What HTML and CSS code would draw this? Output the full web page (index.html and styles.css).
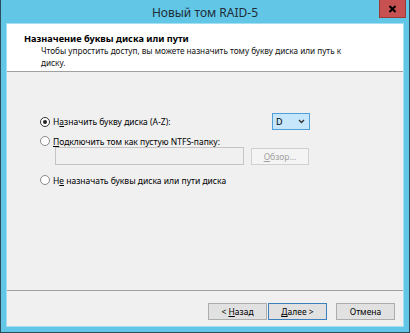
FILE: index.html
```html
<!DOCTYPE html>
<html lang="ru">
<head>
<meta charset="utf-8">
<title>Новый том RAID-5</title>
<link rel="stylesheet" href="styles.css">
</head>
<body>
<div class="window">
  <div class="titlebar">
    <span></span>
    <span class="title">Новый том RAID-5</span>
    <div class="close">
      <svg width="9" height="8" viewBox="0 0 9 8"><path d="M1.5 1 L7.5 7 M7.5 1 L1.5 7" stroke="#000" stroke-width="2" fill="none"/></svg>
    </div>
  </div>
  <div class="client">
    <div class="header">
      <div class="h-title">Назначение буквы диска или пути</div>
      <div class="h-sub">Чтобы упростить доступ, вы можете назначить тому букву диска или путь к<br>диску.</div>
    </div>
    <div class="body">
      <div class="row row1">
        <span class="radio checked"></span>
        <span class="label fixed">Н<u>а</u>значить букву диска (A-Z):</span>
        <div class="combo"><span>D</span>
          <svg width="7" height="5" viewBox="0 0 7 5"><path d="M1 1 L3.5 3.5 L6 1" stroke="#333" stroke-width="1.4" fill="none"/></svg>
        </div>
      </div>
      <div class="row row2">
        <span class="radio"></span>
        <span class="label"><u>П</u>одключить том как пустую NTFS-папку:</span>
      </div>
      <div class="pathrow">
        <div class="textbox"></div>
        <div class="btn disabled"><span><u>О</u>бзор...</span></div>
      </div>
      <div class="row row3">
        <span class="radio"></span>
        <span class="label">Н<u>е</u> назначать буквы диска или пути диска</span>
      </div>
    </div>
    <div class="footer">
      <div class="btn"><span>&lt; <u>Н</u>азад</span></div>
      <div class="btn default"><span><u>Д</u>алее &gt;</span></div>
      <div class="btn cancel"><span>Отмена</span></div>
    </div>
  </div>
</div>
</body>
</html>
```
FILE: styles.css
```css
html, body {
  margin: 0;
  padding: 0;
}
body {
  width: 410px;
  height: 333px;
  overflow: hidden;
  font-family: "Noto Sans", "Open Sans", sans-serif;
  color: #000;
}
.window {
  box-sizing: border-box;
  width: 410px;
  height: 333px;
  background: #62c6e6;
  border: 1px solid #2d4b5b;
  border-top: none;
  padding: 0 5px 5px 5px;
  display: flex;
  flex-direction: column;
}
.titlebar {
  height: 23px;
  margin: 0 -5px;
  display: grid;
  grid-template-columns: 1fr auto 1fr;
  align-items: start;
}
.title {
  font-size: 12px;
  line-height: 14px;
  padding-top: 6px;
  color: #1e2d38;
  white-space: nowrap;
}
.close {
  justify-self: end;
  margin-right: 3px;
  width: 27px;
  height: 18px;
  box-sizing: border-box;
  background: #c75050;
  border: 1px solid #9a3b3b;
  border-top: none;
  display: flex;
  align-items: center;
  justify-content: center;
}
.client {
  flex: 1;
  border: 1px solid #a4def1;
  background: #f0f0f0;
  display: flex;
  flex-direction: column;
}
.header {
  box-sizing: border-box;
  height: 48px;
  background: #fff;
  border-bottom: 1px solid #a0a0a0;
  padding: 8px 0 0 17px;
}
.h-title {
  font-size: 9.2px;
  font-weight: bold;
  line-height: 13px;
}
.h-sub {
  font-size: 8.2px;
  line-height: 12px;
  padding-left: 17px;
  color: #111;
}
.body {
  flex: 1;
  padding: 41px 0 0 33px;
  font-size: 8.5px;
}
.row {
  display: flex;
  align-items: center;
  gap: 3px;
}
.row1 { height: 17px; }
.row2 { height: 12px; margin-top: 5px; }
.row3 { height: 12px; margin-top: 9px; }
.label { white-space: nowrap; }
.label.fixed { width: 216px; }
.radio {
  width: 10px;
  height: 10px;
  box-sizing: border-box;
  border: 1px solid #8a8a8a;
  border-radius: 50%;
  background: #fff;
  display: flex;
  align-items: center;
  justify-content: center;
}
.radio.checked { border-color: #333; }
.radio.checked::after {
  content: "";
  width: 4px;
  height: 4px;
  border-radius: 50%;
  background: #222;
}
.combo {
  width: 38px;
  height: 17px;
  box-sizing: border-box;
  background: #c6e6fb;
  border: 1px solid #4f9fd8;
  display: flex;
  align-items: center;
  justify-content: space-between;
  padding: 0 4px 0 3px;
  font-size: 9px;
}
.pathrow {
  display: flex;
  align-items: center;
  gap: 7px;
  margin-left: 15px;
  height: 18px;
}
.textbox {
  width: 189px;
  height: 18px;
  box-sizing: border-box;
  border: 1px solid #c4c4c4;
  background: #f0f0f0;
}
.btn {
  width: 59px;
  height: 17px;
  box-sizing: border-box;
  border: 1px solid #adadad;
  background: #e1e1e1;
  font-size: 8.5px;
  display: flex;
  align-items: center;
  justify-content: center;
  white-space: nowrap;
}
.btn.disabled {
  width: 58px;
  background: #f4f4f4;
  border-color: #d0d0d0;
  color: #a2a2a2;
}
.btn.default { border-color: #3d80bd; margin-left: 1px; }
.btn.cancel { margin-left: 9px; }
.footer {
  height: 36px;
  box-sizing: border-box;
  border-top: 1px solid #a0a0a0;
  display: flex;
  justify-content: flex-end;
  align-items: flex-start;
  padding: 12px 8px 0 0;
}
```
